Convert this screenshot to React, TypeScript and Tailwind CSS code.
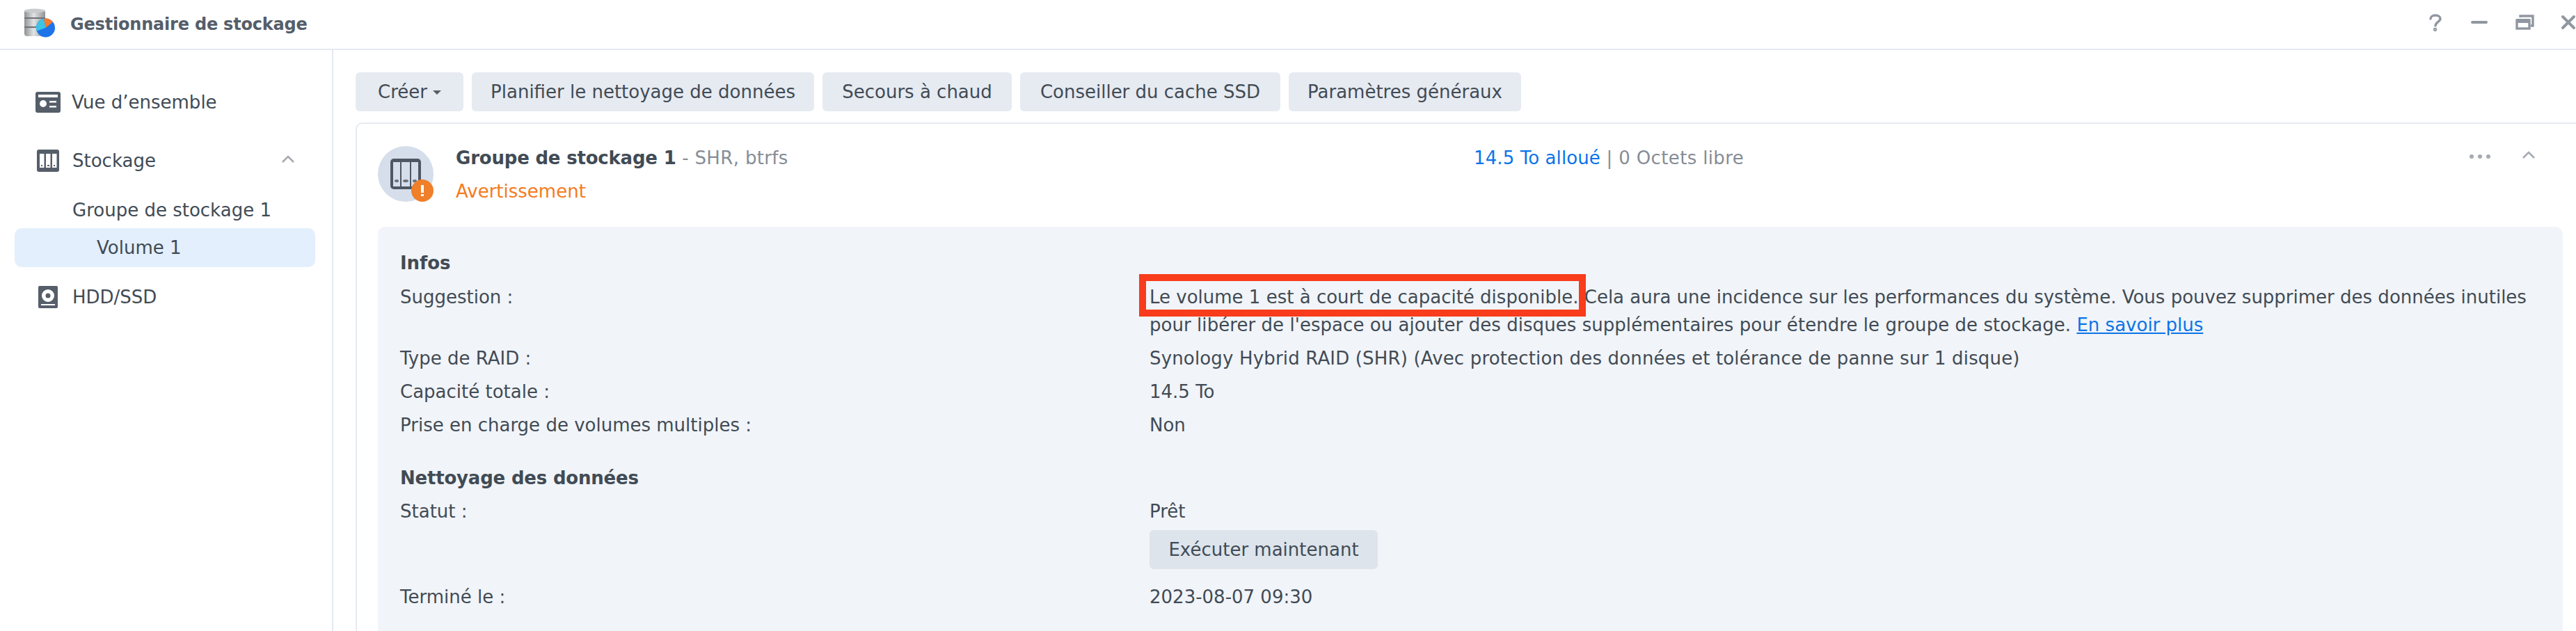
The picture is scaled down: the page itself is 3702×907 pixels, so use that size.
function Row({ label, children, className = "" }: { label: string; children: React.ReactNode; className?: string }) {
  return (
    <div className={`flex ${className}`}>
      <div className="w-[1077px] shrink-0">{label}</div>
      <div className="flex-1">{children}</div>
    </div>
  );
}

function Btn({ w, children }: { w: string; children: React.ReactNode }) {
  return (
    <div className={`${w} h-[56px] rounded-[6px] bg-[#e6eaf1] flex items-center justify-center text-[#414b55] text-[26px] whitespace-nowrap`}>
      {children}
    </div>
  );
}

export default function App() {
  return (
    <div className="w-[3702px] h-[907px] overflow-hidden bg-white text-[#414b55] text-[26px] leading-[40px] font-['DejaVu_Sans',sans-serif]">
      <header className="h-[72px] border-b-2 border-[#e3e8f1] flex items-center relative">
        <svg className="ml-[34px] w-[46px] h-[46px]" viewBox="0 0 46 46">
          <defs>
            <linearGradient id="cyl" x1="0" x2="1" y1="0" y2="0">
              <stop offset="0" stopColor="#8f9294" />
              <stop offset="0.45" stopColor="#e2e3e4" />
              <stop offset="1" stopColor="#8f9294" />
            </linearGradient>
          </defs>
          <rect x="1" y="2" width="30" height="38" rx="4" fill="url(#cyl)" />
          <ellipse cx="16" cy="3.5" rx="15" ry="3" fill="#c9cbcc" />
          <rect x="1" y="13" width="30" height="2" fill="#6f7274" />
          <rect x="1" y="26" width="30" height="2" fill="#6f7274" />
          <circle cx="31.5" cy="28" r="13.5" fill="#1d74e8" />
          <path d="M31.5 28 L18.8 32.5 A13.5 13.5 0 0 1 29 14.7 Z" fill="#3cc3e6" />
          <path d="M31.5 28 L29 14.7 A13.5 13.5 0 0 1 42 19.5 Z" fill="#f47b2d" />
        </svg>
        <span className="ml-[21px] text-[24px] font-bold tracking-[-0.2px] text-[#555e69]">Gestionnaire de stockage</span>
        <div className="absolute right-0 top-0 h-[70px] w-[220px]">
          <svg className="absolute left-[9px] top-[20px]" width="18" height="25" viewBox="0 0 18 25" fill="none" stroke="#9197a0" strokeWidth="3.4" strokeLinecap="round">
            <path d="M2 7c0-3 3-5 7-5s7 2 7 5c0 4-7 5-7 10" />
            <circle cx="8.5" cy="22.5" r="1" />
          </svg>
          <div className="absolute left-[69px] top-[30px] w-[24px] h-[4px] rounded bg-[#9197a0]" />
          <svg className="absolute left-[133px] top-[21px]" width="27" height="22" viewBox="0 0 27 22" fill="none" stroke="#9197a0" strokeWidth="3.4">
            <path d="M7 4V2h18v14h-3" />
            <rect x="2" y="8" width="18" height="12" />
            <path d="M2 9h18" strokeWidth="6" />
          </svg>
          <svg className="absolute left-[198px] top-[21px]" width="22" height="22" viewBox="0 0 22 22" fill="none" stroke="#9197a0" strokeWidth="4" strokeLinecap="round">
            <path d="M3 3l16 16M19 3L3 19" />
          </svg>
        </div>
      </header>
      <div className="flex h-[835px]">
        <aside className="w-[479px] shrink-0 border-r-2 border-[#e3e8f1] pl-[21px] pr-[24px] pt-[51px]">
          <div className="h-[48px] flex items-center">
            <svg className="ml-[30px] w-[36px] h-[30px]" viewBox="0 0 36 30">
              <rect width="36" height="30" rx="3" fill="#555e69" />
              <rect x="4" y="4" width="28" height="4" fill="#fff" />
              <circle cx="11" cy="17" r="5" fill="#fff" />
              <rect x="20" y="13" width="10" height="2.5" fill="#fff" />
              <rect x="20" y="20" width="10" height="2.5" fill="#fff" />
            </svg>
            <span className="ml-[16px] text-[#414b55]">Vue d’ensemble</span>
          </div>
          <div className="h-[48px] mt-[36px] flex items-center relative">
            <svg className="ml-[32px] w-[32px] h-[32px]" viewBox="0 0 32 32">
              <rect width="32" height="32" rx="3" fill="#555e69" />
              <rect x="4" y="6" width="6.5" height="20" fill="#fff" />
              <rect x="13" y="6" width="6.5" height="20" fill="#fff" />
              <rect x="22" y="6" width="6.5" height="20" fill="#fff" />
              <rect x="6" y="22" width="2" height="2" fill="#555e69" />
              <rect x="15" y="22" width="3" height="2" fill="#555e69" />
              <rect x="24" y="22" width="2" height="2" fill="#555e69" />
            </svg>
            <span className="ml-[19px]">Stockage</span>
            <svg className="absolute left-[383px] top-[14px]" width="20" height="14" viewBox="0 0 20 14" fill="none" stroke="#a5aab1" strokeWidth="2.6">
              <path d="M2 12l8-8 8 8" />
            </svg>
          </div>
          <div className="h-[48px] mt-[23px] flex items-center pl-[83px]">Groupe de stockage 1</div>
          <div className="h-[56px] mt-[2px] rounded-[10px] bg-[#e3effc] flex items-center pl-[118px]">Volume 1</div>
          <div className="h-[48px] mt-[19px] flex items-center">
            <svg className="ml-[34px] w-[28px] h-[32px]" viewBox="0 0 28 32">
              <rect width="28" height="32" rx="2" fill="#555e69" />
              <circle cx="14" cy="14" r="9" fill="#fff" />
              <circle cx="14" cy="14" r="3.5" fill="#555e69" />
              <rect x="4" y="26" width="20" height="2" fill="#fff" />
            </svg>
            <span className="ml-[21px]">HDD/SSD</span>
          </div>
        </aside>
        <main className="flex-1 pl-[32px] pt-[32px] min-w-0">
          <div className="flex gap-[12px]">
            <Btn w="w-[155px]">
              Créer
              <span className="ml-[8px] mt-[2px] w-0 h-0 border-x-[6px] border-x-transparent border-t-[6px] border-t-[#555e69]" />
            </Btn>
            <Btn w="w-[492px]">Planifier le nettoyage de données</Btn>
            <Btn w="w-[272px]">Secours à chaud</Btn>
            <Btn w="w-[374px]">Conseiller du cache SSD</Btn>
            <Btn w="w-[334px]">Paramètres généraux</Btn>
          </div>
          <section className="mt-[16px] border-2 border-[#e6eaf1] rounded-tl-[10px] border-r-0 border-b-0 h-[740px] pl-[30px] pr-[19px] pt-[32px]">
            <div className="flex relative h-[80px]">
              <div className="relative w-[80px] h-[80px] rounded-full bg-[#d5deea] flex items-center justify-center">
                <svg width="44" height="44" viewBox="0 0 44 44">
                  <rect width="44" height="44" rx="5" fill="#4e5762" />
                  <rect x="4" y="5" width="10" height="35" fill="#d5deea" />
                  <rect x="16" y="5" width="12" height="35" fill="#d5deea" />
                  <rect x="30" y="5" width="10" height="35" fill="#d5deea" />
                  <ellipse cx="9" cy="32" rx="3" ry="2" fill="#6a727c" />
                  <ellipse cx="22" cy="32" rx="4" ry="2" fill="#6a727c" />
                  <ellipse cx="35" cy="32" rx="3" ry="2" fill="#6a727c" />
                </svg>
                <svg className="absolute right-0 bottom-0" width="32" height="32" viewBox="0 0 32 32">
                  <circle cx="16" cy="16" r="16" fill="#ef7f29" />
                  <rect x="14" y="8" width="4" height="11" fill="#fff" />
                  <rect x="14" y="21" width="4" height="3" fill="#fff" />
                </svg>
              </div>
              <div className="ml-[32px] -mt-[3px]">
                <div className="h-[40px] leading-[40px] whitespace-nowrap"><span className="font-bold tracking-[-0.2px]">Groupe de stockage 1</span><span className="text-[#868d96] tracking-[0.35px]"> - SHR, btrfs</span></div>
                <div className="h-[40px] mt-[8px] text-[#f47b20]">Avertissement</div>
              </div>
              <div className="absolute left-[1575px] -top-[3px] whitespace-nowrap">
                <span className="text-[#0a74e8] tracking-[0.1px]">14.5 To alloué</span><span className="text-[#868d96] tracking-[0.35px]"> | 0 Octets libre</span>
              </div>
              <div className="absolute right-[104px] top-[12px] flex gap-[6px]">
                <span className="w-[6px] h-[6px] rounded-full bg-[#a5aab1]" />
                <span className="w-[6px] h-[6px] rounded-full bg-[#a5aab1]" />
                <span className="w-[6px] h-[6px] rounded-full bg-[#a5aab1]" />
              </div>
              <svg className="absolute right-[39px] top-[5px]" width="20" height="14" viewBox="0 0 20 14" fill="none" stroke="#a5aab1" strokeWidth="2.6">
                <path d="M2 12l8-8 8 8" />
              </svg>
            </div>
            <div className="mt-[36px] bg-[#f1f4f8] rounded-t-[10px] h-[600px] pl-[32px] pr-[32px] pt-[32px]">
              <div className="font-bold tracking-[-0.1px]">Infos</div>
              <div className="mt-[9px]">
                <Row label="Suggestion :">
                  <div className="w-[1980px]">
                    <span className="relative">Le volume 1 est à court de capacité disponible.<span className="absolute -left-[15px] -top-[18px] w-[642px] h-[61px] border-[10px] border-[#f83c1c]" /></span> Cela aura une incidence sur les performances du système. Vous pouvez supprimer des données inutiles <span className="tracking-[0.05px]">pour libérer de l'espace ou ajouter des disques supplémentaires pour étendre le groupe de stockage.</span> <span className="text-[#0a74e8] underline">En savoir plus</span>
                  </div>
                </Row>
                <Row label="Type de RAID :" className="mt-[8px]"><span className="tracking-[0.16px]">Synology Hybrid RAID (SHR) (Avec protection des données et tolérance de panne sur 1 disque)</span></Row>
                <Row label="Capacité totale :" className="mt-[8px]">14.5 To</Row>
                <Row label="Prise en charge de volumes multiples :" className="mt-[8px]">Non</Row>
              </div>
              <div className="font-bold tracking-[-0.2px] mt-[36px]">Nettoyage des données</div>
              <Row label="Statut :" className="mt-[8px]">
                Prêt
                <div className="mt-[7px] w-[328px] h-[56px] rounded-[6px] bg-[#dde4ec] flex items-center justify-center">Exécuter maintenant</div>
              </Row>
              <Row label="Terminé le :" className="mt-[20px]">2023-08-07 09:30</Row>
            </div>
          </section>
        </main>
      </div>
    </div>
  );
}
